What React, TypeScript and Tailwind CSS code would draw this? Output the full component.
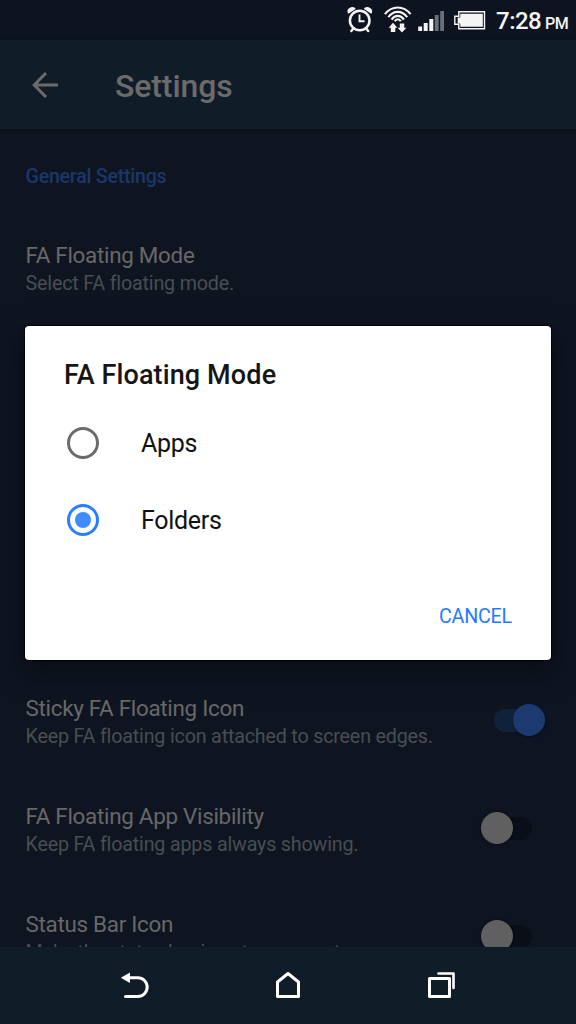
function StatusBar() {
  return (
    <header className="flex h-10 shrink-0 items-center justify-end bg-[#0d1420] text-[#f4f4f4]">
      <svg className="h-10 w-[150px] shrink-0" viewBox="346 0 150 40" fill="none" stroke="currentColor">
        <circle cx="359.7" cy="20.5" r="9.8" strokeWidth="2.5" />
        <path d="M359.5 14.5v6.7h5" strokeWidth="1.9" />
        <path d="m353.5 28.2-2.2 2.8M366 28.2l2.2 2.8" strokeWidth="2.4" strokeLinecap="round" />
        <path d="M348.4 12.8c-1.4-4.6 4-6 6.4-4.2zM371.2 12.8c1.4-4.6-4-6-6.4-4.2z" fill="currentColor" strokeWidth="1.4" strokeLinejoin="round" />
        <path d="M384.9 14.2c7.1-9 18.6-9 25.7 0M388.3 17.1c5.2-7 13.7-7 18.9 0M391.6 19.6c3.4-5 8.9-5 12.3 0M394.8 21.3c1.6-2.7 4.4-2.7 6 0" strokeWidth="2.1" />
        <path d="m393 22.8-4.4 4.9h2.2v4.2h4.5v-4.2h2.1zM402 32.6l4.4-4.9h-2.2v-4.2h-4.4v4.2h-2.2z" fill="currentColor" stroke="none" />
        <g fill="currentColor" stroke="none">
          <path d="M418.2 26.5h3.9V31h-3.9zM423.7 23h4v8h-4zM429.3 19h4v12h-4z" />
          <path d="M434.8 15h3.8v16h-3.8zM440.2 11h3.8v20h-3.8z" fill="#68707c" />
        </g>
        <path d="M458.8 11.8h25.7v17h-25.7v-4.5h-4v-8h4z" strokeWidth="1.4" />
        <path d="M460.3 13.8h22.5v13h-22.5v-3.4h-2.6v-6h2.6z" fill="currentColor" stroke="none" />
      </svg>
      <div className="mt-1 flex w-20 items-baseline whitespace-nowrap leading-10">
        <span className="w-[49px] text-[24px] font-medium tracking-[-0.5px]">7:28</span>
        <span className="text-[16px] font-medium tracking-[-0.4px]">PM</span>
      </div>
    </header>
  );
}

function AppBar() {
  return (
    <div className="z-10 flex h-[89px] shrink-0 items-center bg-[#111c29] text-[#6b6b6b] shadow-[0_1px_4px_rgba(0,0,0,0.45)]">
      <svg className="ml-8 h-7 w-[27px]" viewBox="0 0 27 28" fill="none" stroke="currentColor" strokeWidth="3">
        <path d="M26 14H3M14 2 2.2 14 14 26" />
      </svg>
      <h1 className="ml-14 mt-[2px] text-[32px] font-medium leading-10 tracking-[-0.1px]">Settings</h1>
    </div>
  );
}

function Toggle({ on }: { on: boolean }) {
  return on ? (
    <span className="mr-[31px] mt-[38px] flex h-8 w-[51px] items-center">
      <span className="h-[23px] w-[30px] rounded-l-full bg-[#10223b]" />
      <span className="-ml-[11px] size-8 shrink-0 rounded-full bg-[#1d3a70] shadow-[0_1px_2px_rgba(0,0,0,0.5)]" />
    </span>
  ) : (
    <span className="mr-11 mt-[38px] flex h-8 w-[51px] items-center">
      <span className="z-[1] size-8 shrink-0 rounded-full bg-[#606060] shadow-[0_0_2px_rgba(0,0,0,0.7)]" />
      <span className="-ml-3 h-[23px] w-[31px] rounded-r-full bg-[#090f18]" />
    </span>
  );
}

function SettingRow({ title, detail, on }: { title: string; detail: string; on?: boolean }) {
  return (
    <div className="flex h-[108px] shrink-0 items-start justify-between border-b border-[#0e1824] pl-[25.5px]">
      <div className="whitespace-nowrap pt-7">
        <h2 className="text-[22.4px] leading-7 tracking-[-0.28px] text-[#686868]">{title}</h2>
        <p className="mt-px text-[19.7px] leading-7 tracking-[-0.18px] text-[#494d51]">{detail}</p>
      </div>
      {on !== undefined && <Toggle on={on} />}
    </div>
  );
}

function Option({ label, selected }: { label: string; selected: boolean }) {
  return (
    <label className="flex h-[77px] items-center pl-[42px]">
      <span
        className={
          selected
            ? "flex size-8 items-center justify-center rounded-full border-[3px] border-[#2a7fff]"
            : "size-8 rounded-full border-[3px] border-[#6b6b6b]"
        }
      >
        {selected && <span className="size-4 rounded-full bg-[#4189ff]" />}
      </span>
      <span className="ml-[42px] mt-[3px] text-[25px] leading-8 tracking-[-0.3px] text-[#111]">{label}</span>
    </label>
  );
}

function ModeDialog() {
  return (
    <section
      role="dialog"
      className="absolute left-[25px] top-[326px] z-20 flex h-[334px] w-[526px] flex-col rounded-[4px] bg-white shadow-[0_0_1px_1px_rgba(0,0,0,0.8),0_10px_28px_4px_rgba(0,0,0,0.35)]"
    >
      <h2 className="pl-[39px] pt-8 text-[27px] font-medium leading-[34px] tracking-[0.12px] text-[#151515]">FA Floating Mode</h2>
      <div className="mt-3">
        <Option label="Apps" selected={false} />
        <Option label="Folders" selected />
      </div>
      <button className="mb-[28px] ml-auto mr-[39px] mt-auto text-[19.7px] leading-[30px] tracking-[-0.2px] text-[#1f7bff]">CANCEL</button>
    </section>
  );
}

function NavBar() {
  return (
    <nav className="z-10 flex h-[77px] shrink-0 items-center justify-between bg-[#111c29] pl-[120px] pr-[120px] text-white">
      <svg className="h-8 w-8" viewBox="0 0 32 32" fill="none" stroke="currentColor" strokeWidth="3">
        <path d="M8 7.7h9.8a9.4 9.4 0 0 1 0 18.8H5.5" strokeLinecap="round" />
        <path d="M.8 7.7 10 2.5v10.6z" fill="currentColor" stroke="none" />
      </svg>
      <svg className="h-8 w-8" viewBox="0 0 32 32" fill="none" stroke="currentColor" strokeWidth="3" strokeLinejoin="round">
        <path d="M5.5 26.4V12L16 3.5 26.5 12v14.4z" />
      </svg>
      <svg className="h-8 w-8" viewBox="0 0 32 32" fill="none" stroke="currentColor" strokeWidth="3" strokeLinejoin="round">
        <path d="M5.5 8.5h20v18h-20z" />
        <path d="M14.5 3.5h15v14.5" strokeWidth="2.6" strokeLinecap="round" />
      </svg>
    </nav>
  );
}

export default function App() {
  return (
    <main className="relative flex h-[1024px] w-[576px] flex-col overflow-hidden bg-[#0e1521] font-['Roboto',sans-serif]">
      <StatusBar />
      <AppBar />
      <div className="flex min-h-0 flex-1 flex-col overflow-hidden">
        <h2 className="h-[84px] shrink-0 pl-[25.5px] pt-[33px] text-[19.7px] font-medium leading-[30px] tracking-[-0.28px] text-[#1b3769]">General Settings</h2>
        <SettingRow title="FA Floating Mode" detail="Select FA floating mode." />
        <div className="h-[345px] shrink-0" />
        <SettingRow title="Sticky FA Floating Icon" detail="Keep FA floating icon attached to screen edges." on />
        <SettingRow title="FA Floating App Visibility" detail="Keep FA floating apps always showing." on={false} />
        <SettingRow title="Status Bar Icon" detail="Make the status bar icon transparent." on={false} />
      </div>
      <NavBar />
      <ModeDialog />
    </main>
  );
}
